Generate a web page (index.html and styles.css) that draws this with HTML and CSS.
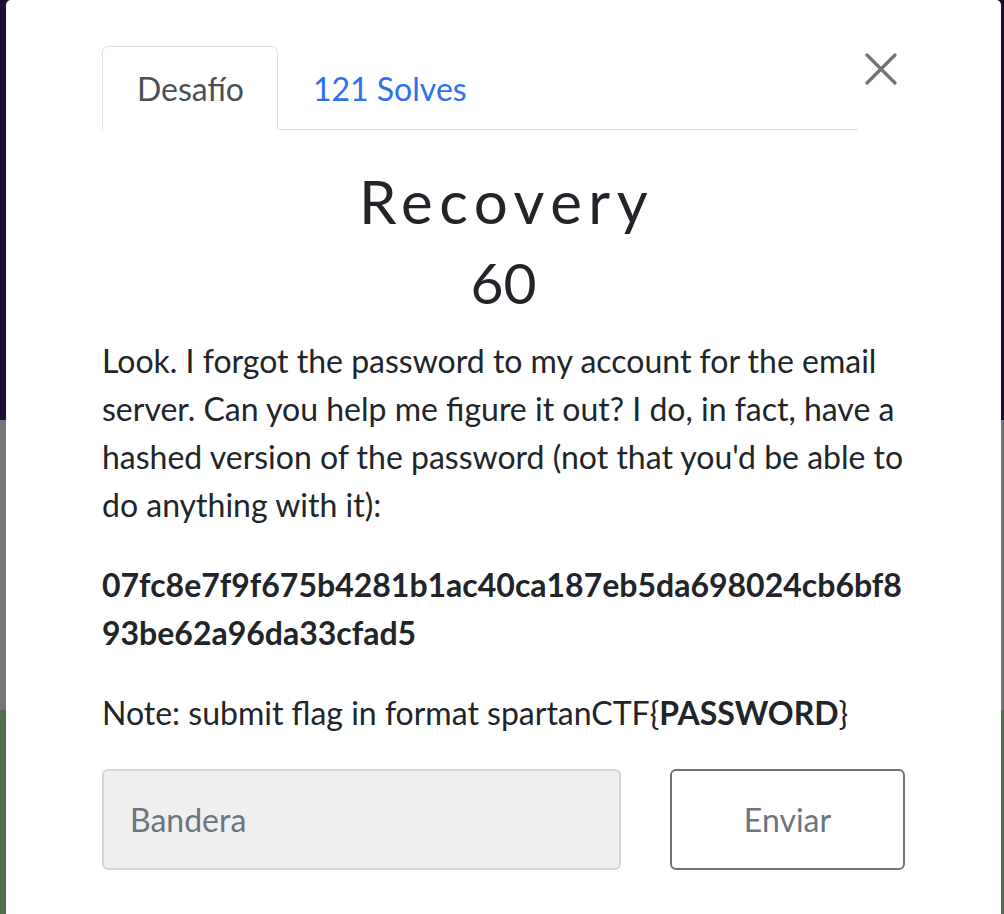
FILE: index.html
```html
<!DOCTYPE html>
<html lang="es">
<head>
<meta charset="utf-8">
<title>Recovery</title>
<link rel="stylesheet" href="styles.css">
</head>
<body>
<div class="modal">
  <div class="modal-header">
    <nav class="tabs">
      <a class="tab active">Desafío</a>
      <a class="tab link">121 Solves</a>
    </nav>
    <button class="close" aria-label="Close">
      <svg width="32" height="32" viewBox="0 0 32 32"><path d="M2 2 L30 30 M30 2 L2 30" stroke="#737373" stroke-width="3.2" stroke-linecap="round" fill="none"/></svg>
    </button>
  </div>
  <h2 class="title">Recovery</h2>
  <h3 class="points">60</h3>
  <div class="desc">
    <p>Look. I forgot the password to my account for the email server. Can you help me figure it out? I do, in fact, have a hashed version of the password (not that you'd be able to do anything with it):</p>
    <p class="hash">07fc8e7f9f675b4281b1ac40ca187eb5da698024cb6bf893be62a96da33cfad5</p>
    <p>Note: submit flag in format spartanCTF{<strong>PASSWORD</strong>}</p>
  </div>
  <form class="submit-row">
    <input class="flag" type="text" placeholder="Bandera">
    <button class="send" type="button">Enviar</button>
  </form>
</div>
</body>
</html>
```
FILE: styles.css
```css
html, body {
  margin: 0;
  padding: 0;
}
body {
  width: 1004px;
  height: 914px;
  overflow: hidden;
  background: linear-gradient(to bottom, #1e0e33 0, #1e0e33 420px, #767676 420px, #767676 710px, #52704d 710px);
  font-family: Lato, "Open Sans", sans-serif;
  color: #212529;
}
.modal {
  margin: 0 3px 0 6px;
  height: 914px;
  box-sizing: border-box;
  background: #fff;
  border-radius: 5px 5px 0 0;
  padding: 46px 96px 0 96px;
}
.modal-header {
  display: flex;
  align-items: flex-start;
}
.tabs {
  flex: 1;
  display: flex;
  border-bottom: 1px solid #dee2e6;
}
.tab {
  display: block;
  padding: 0 33px 0 34px;
  height: 82px;
  line-height: 84px;
  font-size: 32px;
  border: 1px solid transparent;
  border-radius: 6px 6px 0 0;
  margin-bottom: -1px;
  text-decoration: none;
}
.tab.active {
  color: #495057;
  border-color: #dee2e6 #dee2e6 #fff;
  background: #fff;
}
.tab.link {
  color: #2f6ff0;
}
.close {
  width: 47px;
  height: 40px;
  margin-top: 7px;
  padding: 0 0 0 7px;
  border: 0;
  background: none;
  display: flex;
  align-items: flex-start;
  justify-content: flex-start;
}
.close svg {
  display: block;
}
.title {
  margin: 35px 0 0;
  padding-left: 6px;
  text-align: center;
  font-size: 60px;
  font-weight: 400;
  letter-spacing: 6.5px;
  line-height: 72px;
}
.points {
  margin: 11px 0 0;
  text-align: center;
  font-size: 57px;
  font-weight: 400;
  line-height: 68px;
}
.desc {
  margin-top: 21px;
  font-size: 32px;
  line-height: 48px;
}
.desc p {
  margin: 0 0 32px;
}
.hash {
  font-weight: 700;
  font-size: 32px;
  word-break: break-all;
}
.submit-row {
  display: flex;
  justify-content: space-between;
}
.flag {
  width: 519px;
  height: 101px;
  box-sizing: border-box;
  background: #efefef;
  border: 2px solid #d3d6d9;
  border-radius: 6px;
  padding: 0 26px;
  font-family: Lato, sans-serif;
  font-size: 32px;
  color: #495057;
}
.flag::placeholder {
  color: #6c757d;
}
.send {
  width: 235px;
  height: 101px;
  box-sizing: border-box;
  background: #fff;
  border: 2px solid #6c757d;
  border-radius: 6px;
  font-family: Lato, sans-serif;
  font-size: 32px;
  color: #6c757d;
}
```
